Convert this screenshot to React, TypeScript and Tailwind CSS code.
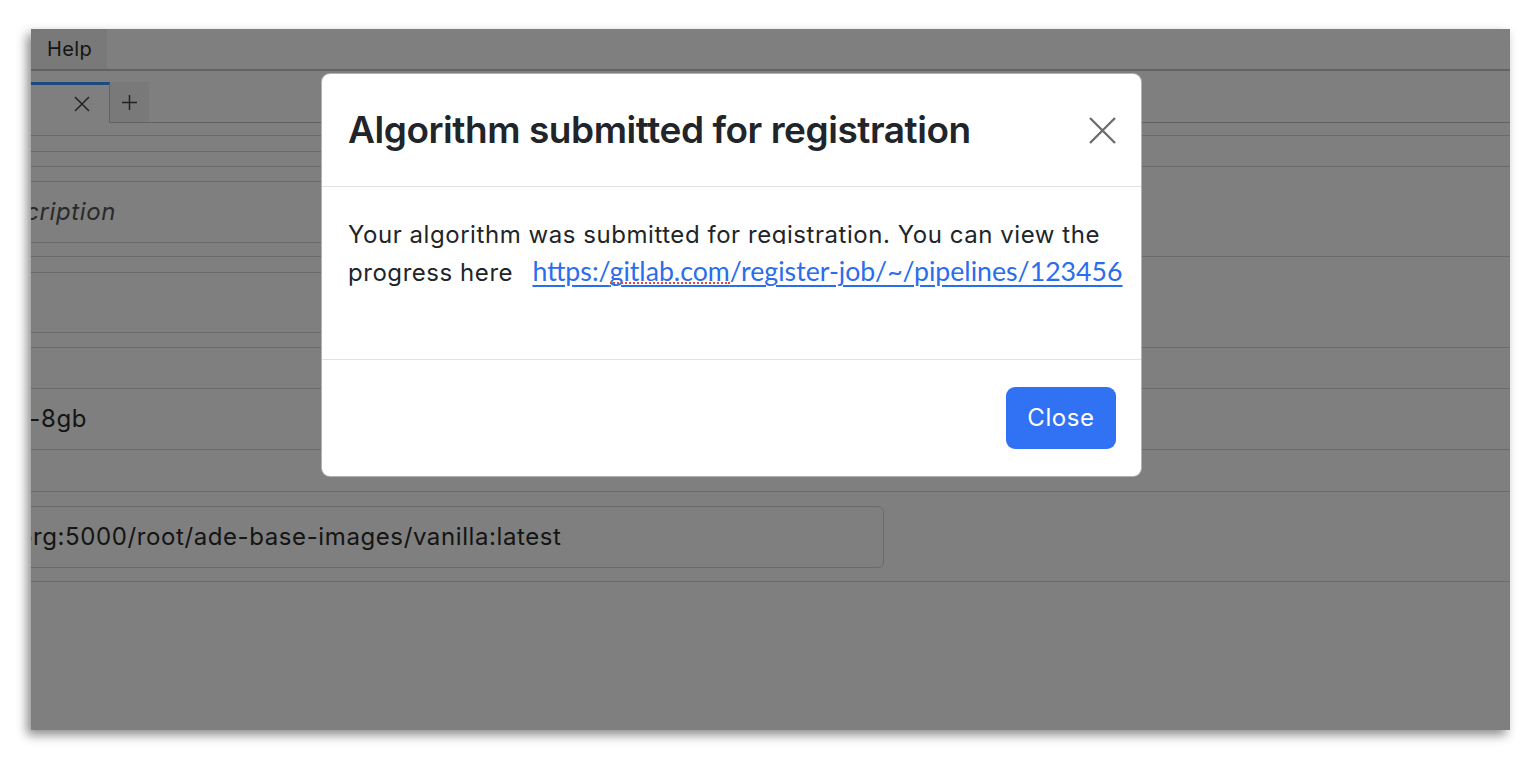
import React from 'react';

const CloseIcon = ({ size, stroke, width }: { size: number; stroke: string; width: number }) => (
  <svg width={size} height={size} viewBox={`0 0 ${size} ${size}`} fill="none">
    <path d={`M1 1L${size - 1} ${size - 1}M${size - 1} 1L1 ${size - 1}`} stroke={stroke} strokeWidth={width} />
  </svg>
);

export default function App() {
  return (
    <div className="min-h-[762px] w-[1538px] bg-white pl-[31px] pt-[29px] font-[Inter,sans-serif]">
      {/* app window */}
      <div className="relative h-[701px] w-[1479px] overflow-hidden bg-white shadow-[-4px_5px_10px_rgba(0,0,0,0.45)]">
        <div className="flex h-full flex-col text-[#2a2a2a]">
          {/* menu bar */}
          <div className="flex h-[42px] border-b-2 border-[#c4c4c4]">
            <div className="flex w-[76px] items-center bg-[#f3f3f3] pl-[16px] text-[20px] tracking-[0.4px]">Help</div>
          </div>

          {/* tab bar */}
          <div className="flex h-[52px] items-end">
            <div className="flex h-[41px] w-[79px] items-center justify-end border-r border-t-[3px] border-r-[#c4c4c4] border-t-[#3b94fe] pr-[19px]">
              <CloseIcon size={16} stroke="#444" width={1.5} />
            </div>
            <div className="flex h-[41px] flex-1 border-b border-[#c4c4c4]">
              <div className="flex h-[40px] w-[39px] items-center justify-center bg-[#f3f3f3]">
                <svg width="17" height="17" viewBox="0 0 17 17" fill="none">
                  <path d="M8.5 1V16M1 8.5H16" stroke="#444" strokeWidth="1.5" />
                </svg>
              </div>
            </div>
          </div>

          {/* form rows */}
          <div className="h-[13px] border-b border-[#d6d6d6]" />
          <div className="h-[16px] w-[880px] border-b border-[#d6d6d6]" />
          <div className="h-[15px] border-b border-[#d6d6d6]" />

          <div className="h-[90px] border-b border-[#d6d6d6] pt-[14px]">
            <div className="-ml-[20px] flex h-[62px] w-[873px] items-center rounded-[6px] border border-[#d6d6d6]">
              <div className="ml-[20px] flex w-[84px] justify-end whitespace-nowrap text-[24px] italic tracking-[0.6px] text-[#555]">
                Description
              </div>
            </div>
          </div>

          <div className="h-[91px] border-b border-[#d6d6d6] pt-[15px]">
            <div className="-ml-[20px] h-[61px] w-[873px] rounded-[6px] border border-[#d6d6d6]" />
          </div>

          <div className="h-[41px] border-b border-[#d6d6d6]" />

          <div className="flex h-[61px] items-center border-b border-[#d6d6d6]">
            <div className="flex w-[56px] justify-end whitespace-nowrap text-[24px] tracking-[0.6px] text-[#2a2a2a]">maap-dps-worker-8gb</div>
          </div>

          <div className="h-[42px] border-b border-[#d6d6d6]" />

          <div className="h-[90px] border-b border-[#d6d6d6] pt-[14px]">
            <div className="-ml-[20px] flex h-[62px] w-[873px] items-center rounded-[6px] border border-[#d6d6d6]">
              <div className="ml-[6px] whitespace-nowrap text-[24px] tracking-[0.6px] text-[#2a2a2a]">
                org:5000/root/ade-base-images/vanilla:latest
              </div>
            </div>
          </div>
        </div>

        {/* backdrop */}
        <div className="absolute inset-0 bg-black/50" />

        {/* modal */}
        <div className="absolute left-[290px] top-[44px] w-[821px] rounded-[9px] border border-black/30 bg-white text-[#212529]">
          <div className="flex h-[113px] items-center justify-between border-b border-[#dee2e6] pl-[26px] pr-[25px]">
            <h5 className="text-[37px] font-semibold leading-[1.2] tracking-[-0.45px]">Algorithm submitted for registration</h5>
            <CloseIcon size={27} stroke="#6e6e6e" width={2.4} />
          </div>

          <div className="h-[172px] pl-[26px] pr-[12px] pt-[29px] text-[24px] leading-[37px] tracking-[0.55px]">
            <p>
              Your algorithm was submitted for registration. You can view the progress here{' '}
              <a
                href="#"
                className="ml-[12px] bg-white pt-[11px] font-[Lato,sans-serif] text-[26.7px] tracking-normal text-[#2a6ded] underline decoration-2 underline-offset-[4px]"
              >
                https:/
                <span className="relative">
                  gitlab.com
                  <span className="absolute bottom-[3px] left-0 right-0 border-b-2 border-dotted border-[#e2453c]" />
                </span>
                /register-job/~/pipelines/123456
              </a>
            </p>
          </div>

          <div className="flex h-[117px] items-center justify-end border-t border-[#dee2e6] pr-[25px]">
            <button className="h-[62px] w-[110px] rounded-[9px] bg-[#3171f4] text-[24px] tracking-[0.6px] text-white">Close</button>
          </div>
        </div>
      </div>
    </div>
  );
}
